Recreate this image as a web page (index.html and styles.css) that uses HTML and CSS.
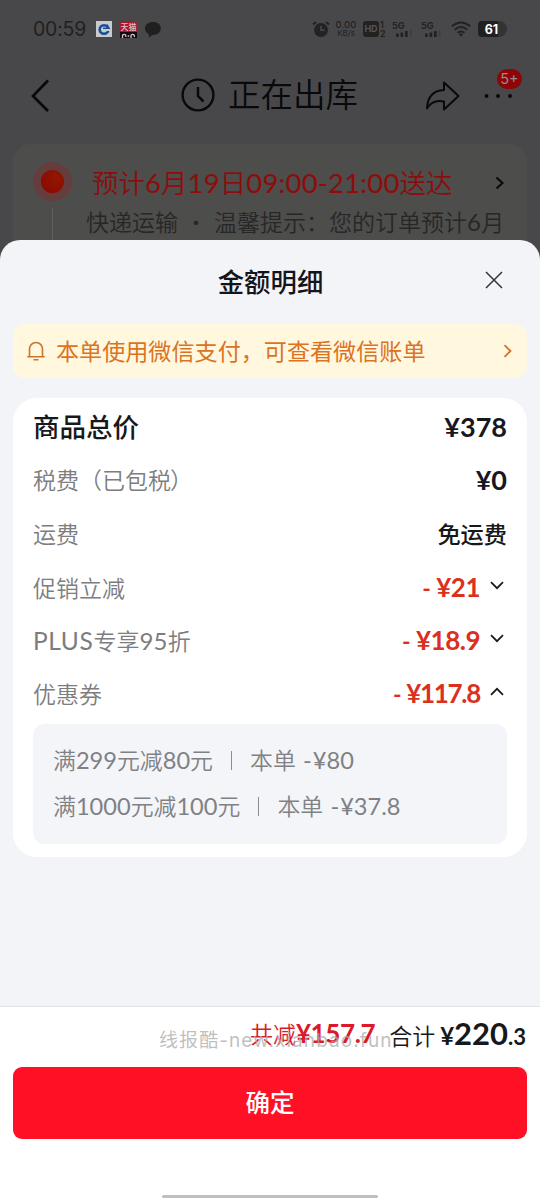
FILE: index.html
```html
<!DOCTYPE html>
<html lang="zh-CN">
<head>
<meta charset="utf-8">
<title>金额明细</title>
<link rel="stylesheet" href="styles.css">
</head>
<body>
<div class="screen">
  <div class="page">
    <div class="status">
      <span class="time">00:59</span>
      <svg class="app-icon" width="16" height="16" viewBox="0 0 16 16"><rect width="16" height="16" fill="#c9cbd0"/><circle cx="8" cy="8.500" r="4.300" fill="none" stroke="#155092" stroke-width="2.600"/><path d="M8 7h6v3H8z" fill="#c9cbd0"/><path d="M7 7.200h6L11 3.500" fill="none" stroke="#155092" stroke-width="1.500"/></svg>
      <span class="tmall"><span>天猫</span><svg width="17" height="6" viewBox="0 0 17 6"><rect width="17" height="6" fill="#17080c"/><path d="M2.500 6V4q0-1.600 1.700-1.600T5.900 4V5M11 6V4q0-1.600 1.700-1.600T14.400 4V5M7.700 4h1.500" fill="none" stroke="#c9c9c9" stroke-width="1.300"/></svg></span>
      <svg class="bubble" width="18" height="17" viewBox="0 0 18 17"><path d="M9 1C4.300 1 1 3.600 1 7.500c0 2.500 1.300 4.400 3.500 5.600L5 16.500l3.500-2.600c5 .2 8.300-2.500 8.300-6.400S13.700 1 9 1z" fill="#202021"/></svg>
      <div class="status-right">
        <svg width="18" height="18" viewBox="0 0 18 18"><circle cx="9" cy="10" r="7" fill="#222223"/><path d="M9 6v4.300h3.500" fill="none" stroke="#48484a" stroke-width="1.600"/><path d="M1 4.500 4 2M17 4.500 14 2" stroke="#222223" stroke-width="2"/></svg>
        <span class="speed"><b>0.00</b><i>KB/s</i></span>
        <span class="hd">HD</span><span class="sim"><i>1</i><i>2</i></span>
        <span class="sig s1"><b>5G</b><svg width="21" height="7" viewBox="0 0 21 7"><path d="M4 3.500h2.700V7H4zM8.500 2.500h2.700V7H8.500zM13 1h2.700v6H13z" fill="#222223"/><path d="M18 0h1.500v7H18z" fill="#3d3d3f"/></svg></span>
        <span class="sig s2"><b>5G</b><svg width="21" height="7" viewBox="0 0 21 7"><path d="M4 3.500h2.700V7H4zM8.500 2.500h2.700V7H8.500zM13 1h2.700v6H13z" fill="#222223"/><path d="M18 0h1.500v7H18z" fill="#3d3d3f"/></svg></span>
        <svg class="wifi" width="20" height="16" viewBox="0 0 20 16"><path d="M.8 5.300Q10-2.200 19.200 5.300M3.700 8.700Q10 3.500 16.300 8.700M6.500 11.800Q10 9 13.500 11.800" fill="none" stroke="#222223" stroke-width="1.900"/><path d="M7.800 13.200Q10 12 12.200 13.200L10 15.700z" fill="#222223"/></svg>
        <span class="battery">61</span>
      </div>
    </div>
    <div class="nav">
      <svg class="back" width="20" height="34" viewBox="0 0 20 34"><path d="M18 1.500 3 17l15 15" fill="none" stroke="#09090a" stroke-width="2.700"/></svg>
      <svg class="clock" width="34" height="34" viewBox="0 0 34 34"><circle cx="17" cy="17" r="15.400" fill="none" stroke="#09090a" stroke-width="2.400"/><path d="M17 9v9l5.500 5.500" fill="none" stroke="#09090a" stroke-width="2.500"/></svg>
      <h1>正在出库</h1>
      <svg class="share" width="36" height="32" viewBox="0 0 36 32"><path d="M19 2.500 33.500 16 19 29.500v-8C11 20 5.500 22.500 2 28.500 2.500 17.500 8 10.500 19 10z" fill="none" stroke="#09090a" stroke-width="2" stroke-linejoin="round"/></svg>
      <div class="more"><svg width="30" height="6" viewBox="0 0 30 6"><circle cx="3.500" cy="3" r="2" fill="#09090a"/><circle cx="15" cy="3" r="2" fill="#09090a"/><circle cx="27" cy="3" r="2" fill="#09090a"/></svg><span class="badge">5+</span></div>
    </div>
    <div class="delivery">
      <div class="track"><span class="dot"></span><span class="line"></span></div>
      <div class="info">
        <div class="eta"><span>预计<i>6</i>月<i>19</i>日<i>09:00-21:00</i>送达</span><svg width="9" height="14" viewBox="0 0 9 14"><path d="m1.500 1.500 6 5.500-6 5.500" fill="none" stroke="#09090a" stroke-width="2"/></svg></div>
        <div class="tip"><span>快递运输</span><span class="sep">·</span><span>温馨提示：您的订单预计<i>6</i>月</span></div>
      </div>
    </div>
  </div>

  <section class="sheet">
    <header class="sheet-head"><h2>金额明细</h2>
      <svg class="close" width="18" height="18" viewBox="0 0 18 18"><path d="m1 1 16 16M17 1 1 17" stroke="#333336" stroke-width="1.500"/></svg>
    </header>
    <div class="notice">
      <svg width="20" height="22" viewBox="0 0 20 22"><path d="M3.500 16.500V9a6.500 6.500 0 0 1 13 0v7.500M1.300 16.700h17.400M7.500 19.700h5" fill="none" stroke="#c9742a" stroke-width="1.600"/></svg>
      <span>本单使用微信支付，可查看微信账单</span>
      <svg class="go" width="9" height="14" viewBox="0 0 9 14"><path d="m1.500 1.200 6 5.800-6 5.800" fill="none" stroke="#d5732d" stroke-width="1.800"/></svg>
    </div>
    <div class="card">
      <div class="row total"><span>商品总价</span><b>¥378</b></div>
      <div class="row tax"><span>税费（已包税<i class="rp">）</i></span><b>¥0</b></div>
      <div class="row ship"><span>运费</span><b class="cn">免运费</b></div>
      <div class="row off"><span>促销立减</span><b><i>-</i>¥21</b><svg width="14" height="9" viewBox="0 0 14 9"><path d="m1 1.200 6 6 6-6" fill="none" stroke="#19191b" stroke-width="1.700"/></svg></div>
      <div class="row off"><span><i class="plus">PLUS</i>专享<i class="num">95</i>折</span><b><i>-</i>¥18.9</b><svg width="14" height="9" viewBox="0 0 14 9"><path d="m1 1.200 6 6 6-6" fill="none" stroke="#19191b" stroke-width="1.700"/></svg></div>
      <div class="row off"><span>优惠券</span><b class="tight"><i>-</i>¥117.8</b><svg width="14" height="9" viewBox="0 0 14 9"><path d="m1 7.800 6-6 6 6" fill="none" stroke="#19191b" stroke-width="1.700"/></svg></div>
      <div class="coupons">
        <div class="coupon"><span>满<i class="num">299</i>元减<i class="num">80</i>元</span><i class="bar"></i><span>本单 <i class="num cut">-</i><i class="num">¥80</i></span></div>
        <div class="coupon"><span>满<i class="num">1000</i>元减<i class="num">100</i>元</span><i class="bar"></i><span>本单 <i class="num cut">-</i><i class="num">¥37.8</i></span></div>
      </div>
    </div>
    <footer class="foot">
      <div class="sum"><span class="saved">共减<b>¥157.7</b></span><span class="pay">合计<b><em>¥</em>220<small>.3</small></b></span></div>
      <div class="mark">线报酷-new.xianbao.fun</div>
      <button class="ok">确定</button>
      <div class="home"></div>
    </footer>
  </section>
</div>
</body>
</html>
```
FILE: styles.css
```css
* { box-sizing: border-box; }
body { margin: 0; font-family: Lato, "Noto Sans CJK SC", sans-serif; }
i, em { font-style: normal; }
h1, h2 { margin: 0; }
svg { display: block; flex: none; }
span, b, h1, h2 { white-space: nowrap; }
.screen { position: relative; width: 540px; height: 1200px; overflow: hidden; background: #48484a; }

.page { height: 260px; background: #48484a; }
.status { height: 58px; padding: 0 33px 0 33px; display: flex; align-items: center; }
.time { width: 63px; font: 400 19.500px/24px Inter, sans-serif; letter-spacing: -.2px; color: #202021; }
.tmall { width: 17px; height: 17px; margin-left: 8px; display: flex; flex-direction: column; border-radius: 4px 4px 0 0; background: #b0142e; overflow: hidden; }
.tmall span { height: 11px; font: 500 8px/12px "Noto Sans CJK SC", sans-serif; color: #d9c3c8; text-align: center; }
.bubble { margin-left: 7px; }
.status-right { margin-left: auto; display: flex; align-items: center; color: #222223; font-family: Inter, sans-serif; }
.speed { width: 24px; margin-left: 4px; display: flex; flex-direction: column; align-items: center; font-size: 9px; line-height: 9px; }
.speed b { font-weight: 500; font-size: 9.500px; }
.speed i { font-size: 8px; }
.hd { width: 16px; height: 16px; margin-left: 5px; border-radius: 3px; background: #222223; color: #555557; font: 700 9px/16px Inter, sans-serif; text-align: center; }
.sim { margin-left: 1px; width: 7px; display: flex; flex-direction: column; font-size: 9px; line-height: 9px; font-weight: 600; }
.sig { width: 22px; height: 17px; display: flex; flex-direction: column; font-size: 9px; line-height: 9px; }
.s1 { margin-left: 5px; }
.s2 { margin-left: 7px; }
.wifi { margin-left: 8px; }
.battery { width: 29px; height: 16px; margin-left: 7px; border-radius: 4px 8px 8px 4px; background: linear-gradient(90deg, #202021 70%, #333335 70%); color: #fff; font: 700 12.500px/17px Inter, sans-serif; text-align: center; padding-right: 2px; }

.nav { height: 86px; padding: 0 27px 13px 30px; display: flex; align-items: center; color: #09090a; }
.back { margin-top: 3px; }
.clock { margin-left: 131px; }
.nav h1 { margin: -4px 0 0 13px; font: 350 32.500px/40px "Noto Sans CJK SC", sans-serif; }
.share { margin: 2px 0 0 67px; }
.more { position: relative; margin: 2px 0 0 auto; }
.badge { position: absolute; left: 14px; top: -24px; width: 25px; height: 20px; border-radius: 10px; background: #8e0509; color: #9e8989; font: 400 14.500px/20px Inter, sans-serif; text-align: center; }
.delivery { height: 116px; margin: 0 13px; padding: 18px 20px 0; border-radius: 18px; background: #4d4d4c; display: flex; }
.track { width: 39px; display: flex; flex-direction: column; align-items: center; }
.dot { flex: none; width: 39px; height: 39px; border: 8.500px solid #653d3c; border-radius: 50%; background: radial-gradient(circle at 65% 35%, #941700, #850700); }
.line { width: 1px; height: 60px; margin-top: 7px; background: #5f5f60; }
.info { flex: 1; padding-left: 14px; }
.eta { height: 41px; padding: 0 3px 0 6px; display: flex; align-items: center; justify-content: space-between; color: #8e0c0b; font-size: 26.500px; font-weight: 350; }
.eta span { line-height: 36px; }
.eta i { font-size: 27.500px; letter-spacing: .15px; font-weight: 400; }
.tip { height: 36px; display: flex; align-items: center; color: #272727; font-size: 23px; font-weight: 350; }
.tip i { font-size: 24px; letter-spacing: .3px; font-weight: 400; }
.sep { width: 36px; text-align: center; font-weight: 700; }

.sheet { position: absolute; left: 0; top: 240px; width: 540px; height: 960px; border-radius: 20px 20px 0 0; background: #f3f4f8; display: flex; flex-direction: column; overflow: hidden; }
.sheet-head { height: 84px; padding: 0 37px 4px 38px; display: grid; grid-template-columns: 18px 1fr 18px; align-items: center; }
.sheet-head h2 { grid-column: 2; margin-top: 4px; text-align: center; color: #14151c; font-weight: 500; font-size: 26.400px; line-height: 36px; }
.notice { height: 54px; margin: 0 13px; padding: 0 15px 0 13px; border-radius: 12px; background: #fff8df; display: flex; align-items: center; color: #dc7322; font-size: 23.100px; }
.notice span { margin: -3px 0 0 10px; }
.notice .go { margin-left: auto; }
.card { height: 459px; margin: 20px 13px 0; padding: 2px 20px 0; border-radius: 24px; background: #fff; }
.row { height: 53px; display: flex; align-items: center; justify-content: space-between; color: #7d7d7e; font-size: 23px; font-weight: 350; line-height: 36px; }
.row.total { color: #17181a; font-size: 26.500px; font-weight: 500; }
.row.tax { height: 54px; }
.row.ship { height: 54px; }
.row b { color: #17181f; font-size: 27px; font-weight: 700; }
.row .cn { color: #17181a; font-size: 23.200px; font-weight: 500; }
.rp { margin-left: -1px; }
.row.off b { margin-left: auto; color: #db3020; font-size: 26px; letter-spacing: -.5px; }
.row.off b.tight { letter-spacing: -1.300px; }
.row.off b i { margin-right: 6px; font-size: 23px; }
.row svg { margin: -4px 3px 0 10px; }
.plus { font-size: 24.500px; font-weight: 400; letter-spacing: .6px; }
.num { font-size: 23.600px; font-weight: 400; }
.cut { margin-left: 1px; letter-spacing: 1px; }
.row .num { font-size: 24px; letter-spacing: .2px; }
.coupons { height: 120px; margin-top: 4px; padding: 13px 20px; border-radius: 12px; background: #f4f5f9; }
.coupon { height: 46px; display: flex; align-items: center; color: #808184; font-size: 22.900px; font-weight: 350; line-height: 36px; }
.bar { width: 1px; height: 19px; margin: 0 18px; background: #8d8e91; }

.foot { position: relative; flex: none; height: 194px; margin-top: auto; border-top: 1px solid #e2e3e8; background: #fff; }
.sum { height: 60px; padding: 0 14px 8px; display: flex; align-items: center; justify-content: flex-end; font-size: 23px; font-weight: 350; }
.saved { margin-right: 14px; color: #db1928; }
.saved b { font-size: 26px; letter-spacing: -.4px; }
.pay { color: #17181c; }
.pay b { margin-left: 5px; font-size: 31px; }
.pay em { font-size: 24px; }
.pay small { font-size: 22px; }
.mark { position: absolute; left: 159px; top: 21px; color: rgba(170, 170, 170, .75); font: 400 19px/26px Inter, "Noto Sans CJK SC", sans-serif; white-space: nowrap; letter-spacing: 1.080px; }
.ok { display: block; width: 514px; height: 72px; margin: 0 13px; padding: 0 0 2px; border: 0; border-radius: 9px; background: #ff1024; color: #fff; font: 500 24.500px/34px "Noto Sans CJK SC", sans-serif; }
.home { width: 216px; height: 3px; margin: 56px auto 0; border-radius: 2px; background: #bfbfc0; }
```
